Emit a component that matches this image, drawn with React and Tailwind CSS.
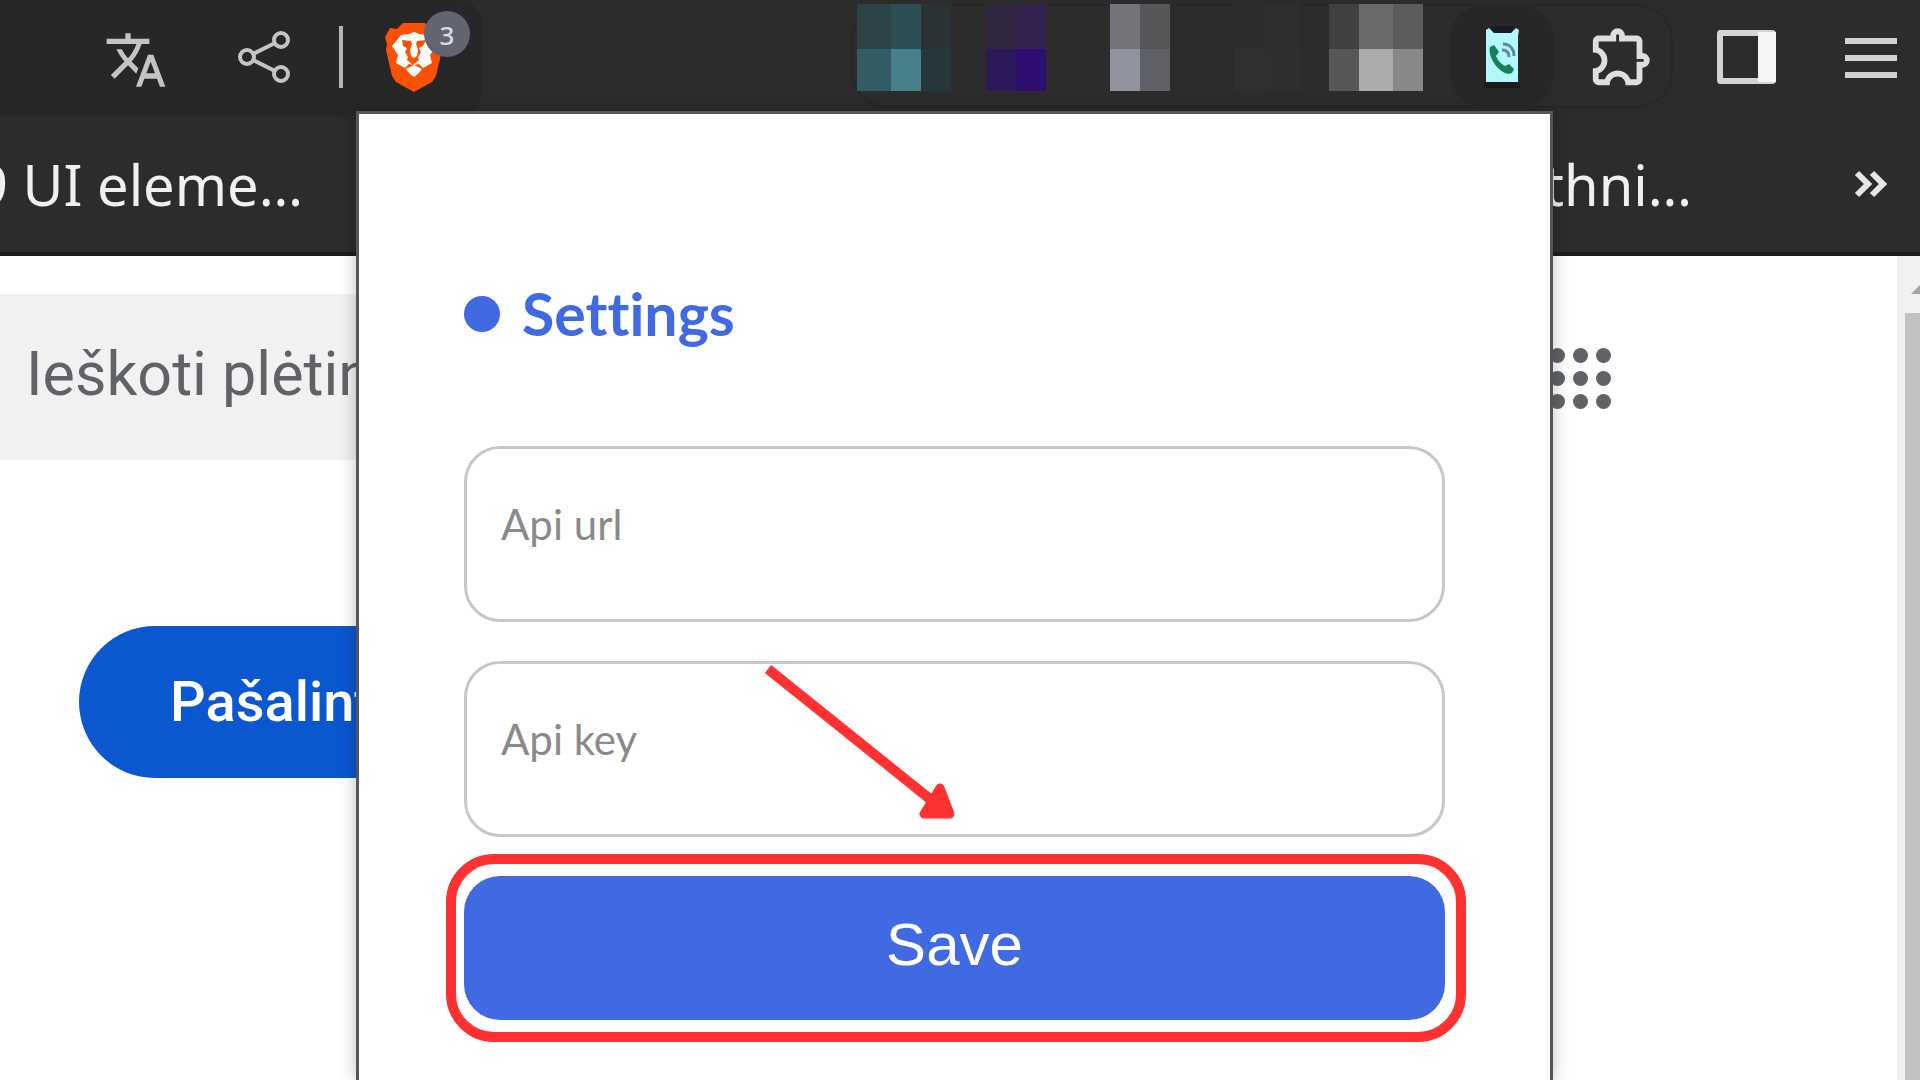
import { MdOutlineExtension, MdTranslate } from 'react-icons/md'

const mosaics = [
  { left: 'ml-0', cols: 'grid-cols-[34px_30px_30px]', cells: ['bg-[#2c4246]', 'bg-[#2d4f54]', 'bg-[#2a3235]', 'bg-[#325b63]', 'bg-[#47808b]', 'bg-[#27363b]'] },
  { left: 'ml-[35px]', cols: 'grid-cols-[30px_30px]', cells: ['bg-[#30263f]', 'bg-[#33224d]', 'bg-[#2d1859]', 'bg-[#2e0e70]'] },
  { left: 'ml-[64px]', cols: 'grid-cols-[30px_30px]', cells: ['bg-[#737479]', 'bg-[#565759]', 'bg-[#90939d]', 'bg-[#5f6065]'] },
  { left: 'ml-[64px]', cols: 'grid-cols-[31px_34px]', cells: ['bg-[#2d2d2d]', 'bg-[#2e2e2e]', 'bg-[#303030]', 'bg-[#2f2f2f]'] },
  { left: 'ml-[30px]', cols: 'grid-cols-[30px_34px_30px]', cells: ['bg-[#404040]', 'bg-[#6a6a6a]', 'bg-[#5c5c5c]', 'bg-[#575757]', 'bg-[#ababab]', 'bg-[#888888]'] },
]

function ShareIcon() {
  return (
    <svg className="w-[54px] h-[54px]" viewBox="0 0 54 54" fill="none" stroke="#c4c4c4" strokeWidth="4">
      <circle cx="9" cy="27" r="7" />
      <circle cx="43" cy="10" r="7" />
      <circle cx="43" cy="44" r="7" />
      <path d="M15 24 37 13M15 30l22 11" />
    </svg>
  )
}

function LionIcon() {
  return (
    <svg className="w-[58px] h-[70px]" viewBox="0 0 58 70">
      <path d="M18 1h22l6 6 7-1 5 9-2 7 1 6-6 26-4 6-18 10-18-10-4-6L1 28l1-6-2-7 5-9 7 1z" fill="#fb5105" />
      <path d="M16 13l8-1 5-2 5 2 8 1 9 11-6 9 2 8-9 5-4-4-5 1-5-1-4 4-9-5 2-8-6-9z" fill="#fff" />
      <path d="M17 18l9 1 1 3-2 6 1 6 3 2 3-2 1-6-2-6 1-3 9-1-3 6-4 2 2 4-3 5 1 3-6 5-6-5 1-3-3-5 2-4-4-2z" fill="#fb5105" />
      <path d="M27 21h4l1 12-3 2-3-2z" fill="#fff" />
      <path d="M29 43l8 4-4 5-4 3-4-3-4-5z" fill="#fff" />
    </svg>
  )
}

function PhoneIcon() {
  return (
    <svg className="w-[38px] h-[62px]" viewBox="0 0 38 62">
      <path d="M1 56h36v6H1zM8 0h22v7H8z" fill="#1b1a20" />
      <path d="M3 4l3-2 5 5h17l5-5 3 2-1 6v46H3z" fill="#b3f7fd" />
      <path d="M7 21l4-2 5 7-3 4c2 5 5 8 9 10l4-2 5 5-2 4c-4 2-9 0-14-5S5 27 7 21z" fill="#148259" />
      <path d="M20 18c7 0 11 5 11 12M19 24c5 0 7 3 7 7" fill="none" stroke="#5a8b91" strokeWidth="3" />
    </svg>
  )
}

function Toolbar() {
  return (
    <div className="h-[116px] flex items-start">
      <div className="h-[116px] w-[482px] shrink-0 rounded-r-3xl bg-[#272727] flex items-start pl-[104px]">
        <button type="button" aria-label="Translate" className="mt-7">
          <MdTranslate className="size-16 text-[#c4c4c4]" />
        </button>
        <button type="button" aria-label="Share" className="mt-[30px] ml-[70px]">
          <ShareIcon />
        </button>
        <div className="mt-[26px] ml-[47px] h-[62px] w-1 bg-[#b4b6b8]" />
        <button type="button" aria-label="Shields" className="relative mt-[22px] ml-[42px]">
          <LionIcon />
          <span className="absolute -top-[11px] left-[39px] size-[46px] rounded-full bg-[#636472] text-[#dcdce0] text-[26px] leading-[48px] font-medium text-center font-['Noto_Sans',sans-serif]">
            3
          </span>
        </button>
      </div>
      <div className="ml-auto mt-1 h-[104px] rounded-[36px] border-2 border-[#282828] flex items-start">
        <div className="flex ml-1 -mt-0.5">
          {mosaics.map((m, i) => (
            <div key={i} className={`grid grid-rows-[45px_42px] ${m.cols} ${m.left}`}>
              {m.cells.map((c, j) => (
                <div key={j} className={c} />
              ))}
            </div>
          ))}
        </div>
        <button type="button" aria-label="Phone extension" className="ml-[27px] h-[100px] w-[104px] rounded-[32px] bg-[#272727] flex justify-center pt-5">
          <PhoneIcon />
        </button>
        <button type="button" aria-label="Extensions" className="mt-[15px] ml-[33px] mr-[14px]">
          <MdOutlineExtension className="size-[70px] text-[#dedede]" />
        </button>
      </div>
      <button type="button" aria-label="Side panel" className="mt-[30px] ml-[44px] h-[54px] w-[59px] rounded-sm border-[6px] border-r-0 border-[#d4d4d4] bg-[#2c2c2c] flex justify-end">
        <span className="-my-1 h-[50px] w-[18px] bg-[#f5f5f5]" />
      </button>
      <button type="button" aria-label="Menu" className="mt-[38px] ml-[69px] mr-[23px] w-[52px] flex flex-col gap-[11px]">
        <span className="h-[6px] w-full bg-[#d2d2d2]" />
        <span className="h-[6px] w-full bg-[#d2d2d2]" />
        <span className="h-[6px] w-full bg-[#d2d2d2]" />
      </button>
    </div>
  )
}

function Bookmarks() {
  return (
    <div className="h-[140px] border-b-4 border-[#1c1c1c] flex items-center justify-between overflow-hidden text-[#f0f0f0] text-[56px] leading-[72px] whitespace-nowrap font-['Noto_Sans',sans-serif]">
      <a href="#ui" className="-ml-[24px]">9 UI eleme…</a>
      <a href="#technical" className="ml-auto mr-[162px]">thni…</a>
      <button type="button" aria-label="More bookmarks" className="mr-[32px]">
        <svg className="w-[34px] h-[28px]" viewBox="0 0 34 28" fill="none" stroke="#e6e6e6" strokeWidth="6">
          <path d="M3 3l11 11L3 25M18 3l11 11-11 11" />
        </svg>
      </button>
    </div>
  )
}

function StorePage() {
  return (
    <main className="flex-1 flex bg-white">
      <div className="flex-1 pt-[38px]">
        <div className="flex items-start">
          <input
            type="text"
            aria-label="Search"
            placeholder="Ieškoti plėtin"
            className="h-[166px] w-[480px] bg-[#f1f1f1] pl-[26px] pb-1.5 text-[61px] placeholder:text-[#5f6368] font-[Roboto,sans-serif]"
          />
          <button type="button" aria-label="Apps" className="ml-auto mr-[286px] mt-[54px] grid grid-cols-3 gap-2">
            {Array.from({ length: 9 }, (_, i) => (
              <span key={i} className="size-[15px] rounded-full bg-[#5f6368]" />
            ))}
          </button>
        </div>
        <button type="button" className="mt-[166px] ml-[79px] h-[152px] w-[400px] rounded-full bg-[#0b57d0] pl-[91px] text-left text-white text-[56px] font-medium font-[Roboto,sans-serif]">
          Pašalint
        </button>
      </div>
      <div className="w-[23px] bg-[#f1f1f1] flex flex-col overflow-hidden">
        <svg className="h-[57px] w-[46px] shrink-0" viewBox="0 0 46 57">
          <path d="M14 38 24 28 34 38z" fill="#a3a3a3" />
        </svg>
        <div className="flex-1 ml-2 bg-[#c1c1c1]" />
      </div>
    </main>
  )
}

function Field({ id, label }) {
  return (
    <input
      id={id}
      type="text"
      aria-label={label}
      placeholder={label}
      className="block h-[176px] w-full rounded-[36px] border-3 border-[#c8c8c8] bg-white pl-[34px] pb-5 text-[42px] placeholder:text-[#8a8a8a]"
    />
  )
}

function SettingsPopup() {
  return (
    <section className="absolute top-[111px] bottom-0 right-[367px] w-[1197px] border-3 border-b-0 border-[#555757] bg-white px-[105px] font-[Lato,sans-serif] shadow-[0_0_16px_rgba(0,0,0,0.25)]">
      <h1 className="mt-[164px] flex items-center gap-[22px] text-[59px] leading-[72px] font-bold text-[#4169e1] [font-variant-ligatures:none]">
        <span className="size-9 rounded-full bg-[#4169e1]" />
        Settings
      </h1>
      <form className="mt-24 flex flex-col gap-[39px]" onSubmit={(e) => e.preventDefault()}>
        <Field id="api-url" label="Api url" />
        <Field id="api-key" label="Api key" />
        <div className="relative">
          <button type="submit" className="block h-[144px] w-full rounded-[36px] bg-[#4169e1] pb-1.5 text-white text-[60px] font-['Liberation_Sans',sans-serif]">
            Save
          </button>
          <div className="absolute -left-[18px] -right-[21px] -inset-y-[22px] rounded-[48px] border-10 border-[#ff3131] pointer-events-none" />
          {/* pointer towards the save button */}
          <svg className="absolute left-[300px] -top-[212px] w-[192px] h-[158px] pointer-events-none" viewBox="0 0 192 158">
            <path d="M4 5 171 139" stroke="#ff3131" strokeWidth="10" />
            <path d="M176 124 186 150 160 150z" fill="#ff3131" stroke="#ff3131" strokeWidth="9" strokeLinejoin="round" />
          </svg>
        </div>
      </form>
    </section>
  )
}

export default function App() {
  return (
    <div className="relative h-screen overflow-hidden flex flex-col bg-[#2c2c2c]">
      <header>
        <Toolbar />
        <Bookmarks />
      </header>
      <StorePage />
      <SettingsPopup />
    </div>
  )
}
